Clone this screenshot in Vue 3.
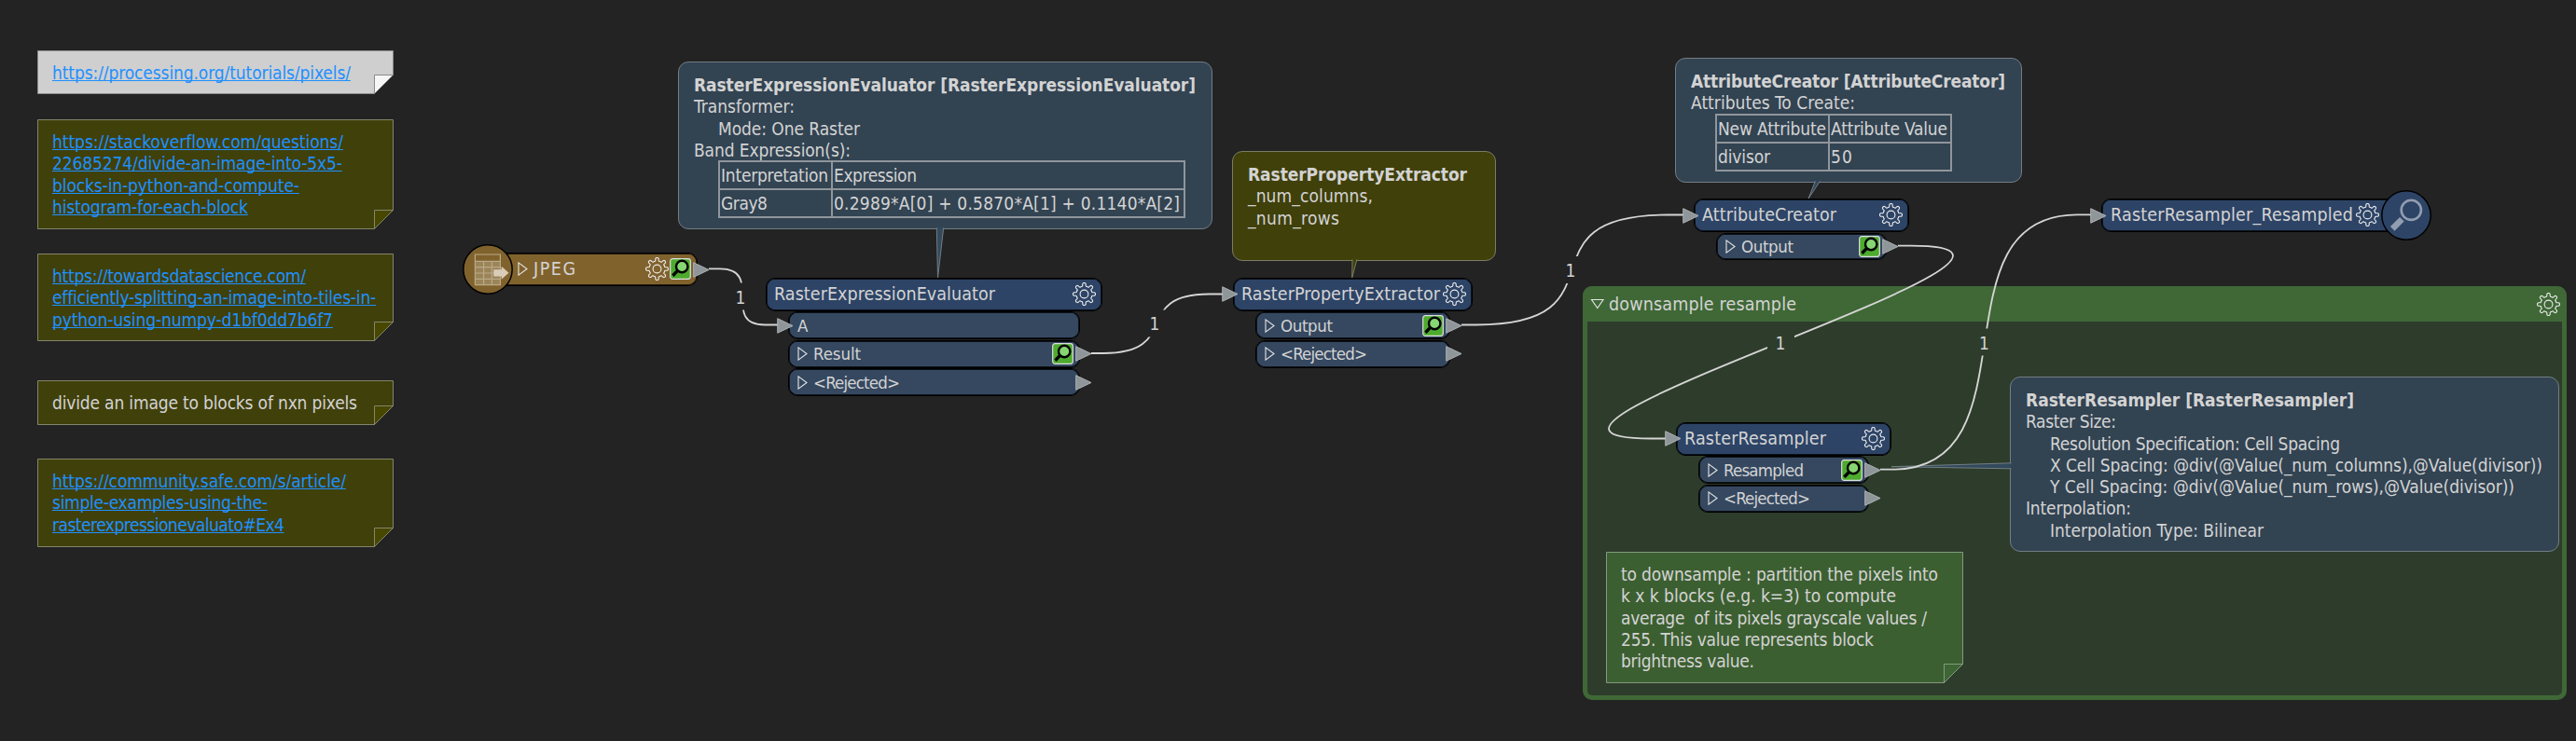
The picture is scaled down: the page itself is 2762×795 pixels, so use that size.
<script setup>
const fit = (el, { value }) => {
  if (!value) return
  const count = el.textContent.length
  if (count < 2) return
  el.style.letterSpacing = '0px'
  const natural = el.getBoundingClientRect().width
  el.style.letterSpacing = `${(value - natural) / (count - 1)}px`
}
const vFit = { mounted: fit }

const place = (o) => ({
  left: `${o.x}px`,
  top: `${o.y}px`,
  width: o.w ? `${o.w}px` : undefined,
  height: o.h ? `${o.h}px` : undefined,
})

const notes = [
  { x: 40, y: 54, w: 382, h: 47, kind: 'grey', link: true, lines: [['https://processing.org/tutorials/pixels/', 320]] },
  {
    x: 40, y: 128, w: 382, h: 118, kind: 'olive', link: true,
    lines: [
      ['https://stackoverflow.com/questions/', 312],
      ['22685274/divide-an-image-into-5x5-', 311],
      ['blocks-in-python-and-compute-', 265],
      ['histogram-for-each-block', 210],
    ],
  },
  {
    x: 40, y: 272, w: 382, h: 94, kind: 'olive', link: true,
    lines: [
      ['https://towardsdatascience.com/', 272],
      ['efficiently-splitting-an-image-into-tiles-in-', 347],
      ['python-using-numpy-d1bf0dd7b6f7', 301],
    ],
  },
  { x: 40, y: 408, w: 382, h: 48, kind: 'olive', lines: [['divide an image to blocks of nxn pixels', 327]] },
  {
    x: 40, y: 492, w: 382, h: 95, kind: 'olive', link: true,
    lines: [
      ['https://community.safe.com/s/article/', 315],
      ['simple-examples-using-the-', 231],
      ['rasterexpressionevaluato#Ex4', 249],
    ],
  },
  {
    x: 1722, y: 592, w: 383, h: 141, kind: 'green',
    lines: [
      ['to downsample : partition the pixels into', 340],
      ['k x k blocks (e.g. k=3) to compute', 295],
      ['average  of its pixels grayscale values /', 328],
      ['255. This value represents block', 271],
      ['brightness value.', 143],
    ],
  },
]

const callouts = [
  {
    x: 727, y: 66, w: 573, h: 180, kind: 'blue',
    title: ['RasterExpressionEvaluator [RasterExpressionEvaluator]', 538],
    lines: [['Transformer:', 108], ['Mode: One Raster', 152, true], ['Band Expression(s):', 168]],
    table: { cols: '119px 376px', rows: [[['Interpretation', 115], ['Expression', 89]], [['Gray8', 50], ['0.2989*A[0] + 0.5870*A[1] + 0.1140*A[2]', 371]]] },
  },
  {
    x: 1321, y: 162, w: 283, h: 118, kind: 'olive',
    title: ['RasterPropertyExtractor', 235],
    lines: [['_num_columns,', 134], ['_num_rows', 98]],
  },
  {
    x: 1796, y: 62, w: 372, h: 134, kind: 'blue',
    title: ['AttributeCreator [AttributeCreator]', 337],
    lines: [['Attributes To Create:', 176]],
    table: { cols: '119px 129px', rows: [[['New Attribute', 116], ['Attribute Value', 125]], [['divisor', 56], ['50', 23]]] },
  },
  {
    x: 2155, y: 404, w: 589, h: 188, kind: 'blue',
    title: ['RasterResampler [RasterResampler]', 352],
    lines: [
      ['Raster Size:', 97],
      ['Resolution Specification: Cell Spacing', 311, true],
      ['X Cell Spacing: @div(@Value(_num_columns),@Value(divisor))', 528, true],
      ['Y Cell Spacing: @div(@Value(_num_rows),@Value(divisor))', 498, true],
      ['Interpolation:', 113],
      ['Interpolation Type: Bilinear', 229, true],
    ],
  },
]

const tails = [
  { kind: 'blue', d: 'M1004.3 244.3L1005.5 298L1011.7 244.3' },
  { kind: 'olive', d: 'M1450 278.3L1449.7 298L1454.9 278.3' },
  { kind: 'blue', d: 'M1946.4 194.3L1939 213L1951.5 194.3' },
  { kind: 'blue', d: 'M2156.5 496.8L2028 500.7L2156.5 502.8' },
]

const nodes = [
  {
    x: 821, y: 297.6, w: 361, title: ['RasterExpressionEvaluator', 237],
    ports: [{ label: ['A', 0], input: true }, { label: ['Result', 51], inspect: true, output: true }, { label: ['<Rejected>', 93], output: true }],
  },
  {
    x: 1322, y: 297.6, w: 257, title: ['RasterPropertyExtractor', 213], input: true,
    ports: [{ label: ['Output', 56], inspect: true, output: true }, { label: ['<Rejected>', 93], output: true }],
  },
  { x: 1816, y: 213, w: 231, title: ['AttributeCreator', 144], input: true, ports: [{ label: ['Output', 56], inspect: true, output: true }] },
  {
    x: 1797, y: 452.6, w: 231, title: ['RasterResampler', 152], input: true,
    ports: [{ label: ['Resampled', 86], inspect: true, output: true }, { label: ['<Rejected>', 93], output: true }],
  },
]

const edges = [
  'M760 288.3H772C820 288.3 772 348.5 820 348.5H834',
  'M1170 379H1183C1269 379 1211 315.5 1297 315.5H1311',
  'M1567 348.5H1583C1749 348.5 1622 230.5 1788 230.5H1805',
  'M2035 263.7H2049C2279 263.7 1540 470.5 1770 470.5H1786',
  'M2016 503.7H2029C2185.5 503.7 2070.5 230.3 2227 230.3H2242',
]
const gaps = [[796, 318], [1239.3, 347], [1685.5, 289.5], [1909.5, 367], [2128, 367]]
const counts = [[794, 326], [1238, 354], [1684, 296.7], [1909, 375], [2127.4, 375]]

const polar = (r, deg) => {
  const a = (deg * Math.PI) / 180
  return `${(12.5 + r * Math.cos(a)).toFixed(2)} ${(12.5 + r * Math.sin(a)).toFixed(2)}`
}
let gear = ''
for (let i = 0; i < 8; i++) {
  const t = i * 45
  gear += `${i ? 'L' : 'M'}${polar(9, t - 11)}L${polar(10.9, t - 9)}Q${polar(12.2, t - 6)} ${polar(12, t)}Q${polar(12.2, t + 6)} ${polar(10.9, t + 9)}L${polar(9, t + 11)}Q${polar(8, t + 15)} ${polar(8.7, t + 22.5)}Q${polar(8, t + 30)} ${polar(9, t + 34)}`
}
gear += 'Z'
</script>

<template>
  <main class="canvas">
    <section class="group">
      <header class="group-head">
        <svg class="fold-arrow" viewBox="0 0 16 12"><path d="M1.5 1.5H14L7.8 10.5Z" /></svg>
        <span class="group-title"><span v-fit="201" class="txt">downsample resample</span></span>
        <svg class="gear" viewBox="0 0 25 25"><path :d="gear" /><circle cx="12.5" cy="12.5" r="4.4" /></svg>
      </header>
    </section>

    <article v-for="n in notes" :key="n.y" :class="['note', n.kind, { link: n.link }]" :style="place(n)">
      <svg class="note-shape" :viewBox="`0 0 ${n.w} ${n.h}`">
        <path class="sheet" :d="`M.5 .5H${n.w - 0.5}V${n.h - 20.5}L${n.w - 20.5} ${n.h - 0.5}H.5Z`" />
        <path class="corner" :d="`M${n.w - 20.5} ${n.h - 0.5}V${n.h - 20.5}H${n.w - 0.5}Z`" />
      </svg>
      <div class="note-text">
        <p v-for="l in n.lines" :key="l[0]" class="line"><span v-fit="l[1]" class="txt">{{ l[0] }}</span></p>
      </div>
    </article>

    <article v-for="c in callouts" :key="c.x" :class="['callout', c.kind]" :style="place(c)">
      <h2 class="line"><span v-fit="c.title[1]" class="txt">{{ c.title[0] }}</span></h2>
      <p v-for="l in c.lines" :key="l[0]" :class="['line', { indent: l[2] }]"><span v-fit="l[1]" class="txt">{{ l[0] }}</span></p>
      <div v-if="c.table" class="table" :style="{ gridTemplateColumns: c.table.cols }">
        <template v-for="(row, i) in c.table.rows" :key="i">
          <div v-for="cell in row" :key="cell[0]" class="cell"><span v-fit="cell[1]" class="txt">{{ cell[0] }}</span></div>
        </template>
      </div>
    </article>

    <svg class="layer" viewBox="0 0 2762 795">
      <mask id="gaps" maskUnits="userSpaceOnUse" x="0" y="0" width="2762" height="795">
        <rect width="2762" height="795" fill="#fff" />
        <rect v-for="g in gaps" :key="g[0]" :x="g[0] - 14.5" :y="g[1] - 14.5" width="29" height="29" fill="#000" />
      </mask>
      <path v-for="t in tails" :key="t.d" :class="['tail', t.kind]" :d="t.d" />
      <g mask="url(#gaps)"><path v-for="e in edges" :key="e" class="edge" :d="e" /></g>
      <text v-for="c in counts" :key="c[0]" class="count" :x="c[0]" :y="c[1]">1</text>
    </svg>

    <section v-for="n in nodes" :key="n.x" class="node" :style="place(n)">
      <header class="bar">
        <svg v-if="n.input" class="plug in" viewBox="0 0 18 17"><path d="M.7 .7L17 8.5L.7 16.3Z" /></svg>
        <span v-fit="n.title[1]" class="txt">{{ n.title[0] }}</span>
        <svg class="gear" viewBox="0 0 25 25"><path :d="gear" /><circle cx="12.5" cy="12.5" r="4.4" /></svg>
      </header>
      <div v-for="p in n.ports" :key="p.label[0]" class="port">
        <svg v-if="p.input" class="plug in" viewBox="0 0 18 17"><path d="M.7 .7L17 8.5L.7 16.3Z" /></svg>
        <svg v-else class="expand" viewBox="0 0 11 15"><path d="M1 .9L10 7.5L1 14.1Z" /></svg>
        <span v-fit="p.label[1]" class="txt">{{ p.label[0] }}</span>
        <svg v-if="p.inspect" class="inspect" viewBox="0 0 23 23">
          <rect x=".7" y=".7" width="21.6" height="21.6" rx="2.5" />
          <path d="M8.6 13.4L3.4 18.8" /><circle cx="13.2" cy="9" r="6.2" />
        </svg>
        <svg v-if="p.output" class="plug out" viewBox="0 0 18 17"><path d="M.7 .7L17 8.5L.7 16.3Z" /></svg>
      </div>
    </section>

    <section class="reader">
      <header class="bar">
        <svg class="expand" viewBox="0 0 11 15"><path d="M1 .9L10 7.5L1 14.1Z" /></svg>
        <span v-fit="45" class="txt">JPEG</span>
        <svg class="gear" viewBox="0 0 25 25"><path :d="gear" /><circle cx="12.5" cy="12.5" r="4.4" /></svg>
        <svg class="inspect" viewBox="0 0 23 23">
          <rect x=".7" y=".7" width="21.6" height="21.6" rx="2.5" />
          <path d="M8.6 13.4L3.4 18.8" /><circle cx="13.2" cy="9" r="6.2" />
        </svg>
        <svg class="plug out" viewBox="0 0 18 17"><path d="M.7 .7L17 8.5L.7 16.3Z" /></svg>
      </header>
      <svg class="disc" viewBox="0 0 54 54">
        <circle class="disc-bg" cx="27" cy="27" r="26.2" />
        <rect class="sheet-fill" x="13.4" y="18.4" width="27" height="25.2" />
        <path class="sheet-grid" d="M13.4 11H40.4V43.6H13.4ZM13.4 18.4H40.4M13.4 24.7H40.4M13.4 31H40.4M13.4 37.3H40.4M22.6 18.4V43.6M31.4 18.4V43.6" />
        <path class="sheet-arrow" d="M33.3 27.2H41.7V23.8L49.5 30.8L41.7 37.8V34.6H33.3Z" />
      </svg>
    </section>

    <section class="inspector">
      <header class="bar">
        <svg class="plug in" viewBox="0 0 18 17"><path d="M.7 .7L17 8.5L.7 16.3Z" /></svg>
        <span v-fit="260" class="txt">RasterResampler_Resampled</span>
        <svg class="gear" viewBox="0 0 25 25"><path :d="gear" /><circle cx="12.5" cy="12.5" r="4.4" /></svg>
      </header>
      <svg class="disc" viewBox="0 0 54 54">
        <circle class="disc-bg" cx="27" cy="27" r="26.2" />
        <circle class="lens" cx="32.3" cy="21.3" r="10.6" />
        <path class="handle" d="M22.4 31.2L12.2 41.4" />
      </svg>
    </section>
  </main>
</template>

<style>
html,
body {
  margin: 0;
  background: #232323;
}
</style>

<style scoped>
.canvas {
  position: relative;
  width: 2762px;
  height: 795px;
  overflow: hidden;
  background: #232323;
  color: #d3d3d3;
  font-family: "DejaVu Sans Condensed", "DejaVu Sans", sans-serif;
  font-stretch: condensed;
  font-size: 19px;
}
.txt {
  white-space: pre;
  flex: none;
}
.line {
  margin: 0;
  height: 23.3px;
  line-height: 23.3px;
  font-size: 19px;
  white-space: pre;
}
.layer {
  position: absolute;
  inset: 0;
  width: 2762px;
  height: 795px;
}

.note {
  position: absolute;
  --fill: #40400b;
  --fold: #474700;
  --edge: #85856a;
}
.note.grey {
  --fill: #cfcfcf;
  --fold: #f6f6f6;
  --edge: #8a8a8a;
}
.note.green {
  --fill: #3c5f31;
  --fold: #3e6634;
  --edge: #839a7e;
}
.note-shape {
  position: absolute;
  inset: 0;
  width: 100%;
  height: 100%;
}
.sheet {
  fill: var(--fill);
  stroke: var(--edge);
}
.corner {
  fill: var(--fold);
  stroke: var(--edge);
}
.note-text {
  position: relative;
  padding: 13px 0 0 16px;
}
.note.link .txt {
  color: #1e90ff;
  text-decoration: underline;
  text-decoration-thickness: 1px;
  text-decoration-skip-ink: none;
  text-underline-offset: 1px;
}

.callout {
  position: absolute;
  box-sizing: border-box;
  padding: 13px 0 0 16px;
  border: 1px solid #737d85;
  border-radius: 11px;
  background: #324352;
}
.callout.olive {
  background: #40400b;
  border-color: #7c7c62;
}
.callout h2 {
  font-weight: 700;
}
.indent {
  padding-left: 26px;
}
.table {
  display: grid;
  grid-auto-rows: 28px;
  gap: 2px;
  width: max-content;
  margin: -1px 0 0 26px;
  border: 2px solid #90969b;
  background: #90969b;
}
.cell {
  display: flex;
  align-items: center;
  padding-left: 1px;
  background: #324352;
}
.tail {
  fill: #324a5c;
  stroke: #737d85;
}
.tail.olive {
  fill: #40400b;
  stroke: #7c7c62;
}
.edge {
  fill: none;
  stroke: #d6d6d6;
  stroke-width: 1.8;
}
.count {
  fill: #d3d3d3;
  font-size: 19px;
  text-anchor: middle;
}

.bar,
.port {
  position: relative;
  display: flex;
  align-items: center;
  box-sizing: border-box;
  border: 1px solid #000;
  border-radius: 10px;
  box-shadow: inset 0 0 0 0.7px #000;
}
.bar {
  height: 36px;
  padding: 0 6px 1px 8px;
  background: #2d4466;
  font-size: 19.5px;
}
.port {
  height: 29.6px;
  margin: 0.9px 24px 0;
  padding: 0 6px 0 9px;
  background: #354860;
  font-size: 18.5px;
}
.node {
  position: absolute;
}
.gear {
  flex: none;
  width: 25px;
  height: 25px;
  margin-left: auto;
  fill: none;
  stroke: #ececec;
  stroke-width: 1.1;
}
.expand {
  flex: none;
  width: 11px;
  height: 15px;
  margin-right: 6px;
  fill: none;
  stroke: #e6e6e6;
  stroke-width: 1.1;
}
.inspect {
  flex: none;
  width: 23px;
  height: 23px;
  margin-left: auto;
}
.inspect rect {
  fill: #4dab2e;
  stroke: #dedede;
  stroke-width: 1.2;
}
.inspect circle {
  fill: #86d672;
  stroke: #000;
  stroke-width: 2.4;
}
.inspect path {
  stroke: #000;
  stroke-width: 3.4;
}
.plug {
  position: absolute;
  top: 50%;
  width: 18px;
  height: 17px;
  margin-top: -8.5px;
  fill: #8f9699;
  stroke: #b4b8ba;
  stroke-width: 0.9;
}
.plug.in {
  left: -13.5px;
}
.plug.out {
  right: -14px;
}

.group {
  position: absolute;
  left: 1697px;
  top: 307px;
  width: 1055px;
  height: 444px;
  box-sizing: border-box;
  border: 5px solid #3f6836;
  border-top: 0;
  border-radius: 10px;
  background: #2e3d2b;
}
.group-head {
  display: flex;
  align-items: center;
  height: 38px;
  margin: 0 -5px;
  padding: 0 7px 0 8px;
  border-radius: 10px 10px 0 0;
  background: #3f6836;
  box-sizing: border-box;
  font-size: 19.5px;
}
.fold-arrow {
  width: 16px;
  height: 12px;
  margin-right: 4px;
  fill: none;
  stroke: #e6e6e6;
  stroke-width: 1.1;
}

.reader {
  position: absolute;
  left: 496px;
  top: 262px;
  width: 252px;
  height: 54px;
}
.reader .bar {
  margin: 9px 0 0 27px;
  padding-left: 31px;
  background: #80622d;
}
.reader .inspect {
  margin-left: 1px;
}
.disc {
  position: absolute;
  top: 0;
  width: 54px;
  height: 54px;
}
.reader .disc {
  left: 0;
}
.disc-bg {
  fill: #80622d;
  stroke: #000;
  stroke-width: 1.5;
}
.sheet-fill {
  fill: #9b8458;
}
.sheet-grid {
  fill: none;
  stroke: #b9a988;
  stroke-width: 1.2;
}
.sheet-arrow {
  fill: #d9cdb8;
}
.inspector {
  position: absolute;
  left: 2253px;
  top: 204px;
  width: 354px;
  height: 54px;
}
.inspector .bar {
  margin: 9px 27px 0 0;
  padding: 0 28px 1px 9px;
}
.inspector .disc {
  right: 0;
}
.inspector .disc-bg {
  fill: #2d4466;
}
.lens {
  fill: none;
  stroke: #919db0;
  stroke-width: 2.6;
}
.handle {
  stroke: #919db0;
  stroke-width: 6.5;
}
</style>
